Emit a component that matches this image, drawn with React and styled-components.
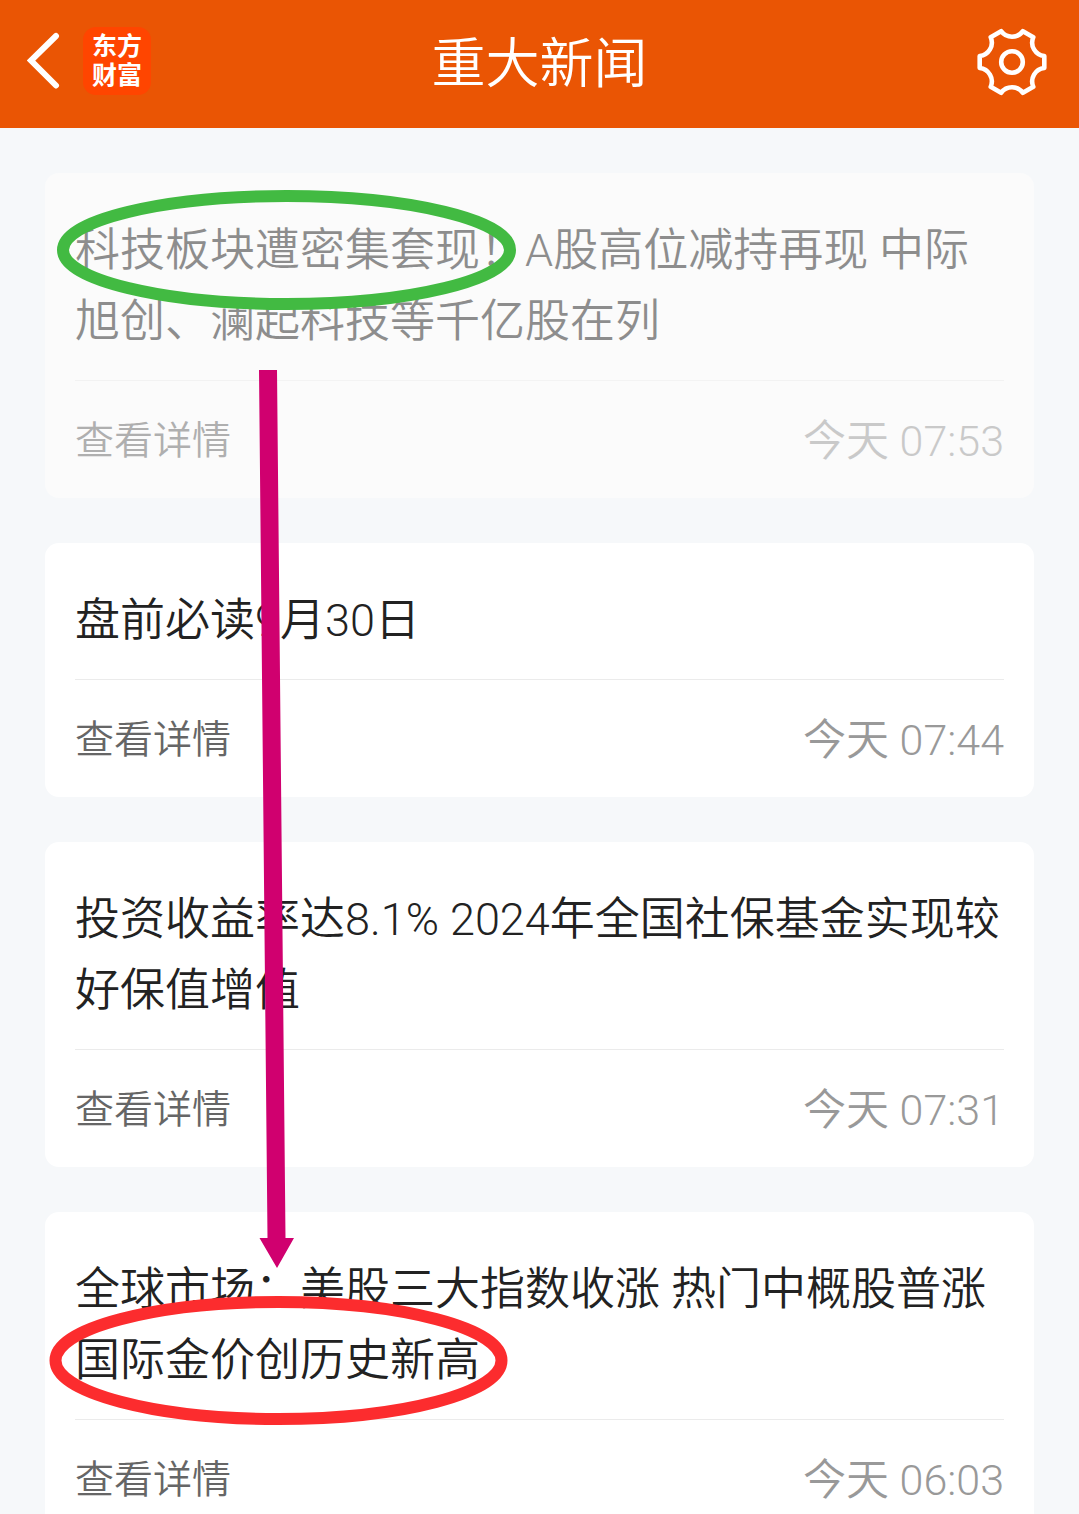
import React from "react";
import styled, { createGlobalStyle } from "styled-components";

const GlobalStyle = createGlobalStyle`
  * { box-sizing: border-box; }
  body {
    margin: 0;
    background: #f6f8fa;
    font-family: Roboto, "Noto Sans CJK SC", sans-serif;
    font-weight: 350;
  }
`;

const Screen = styled.div`
  display: flex;
  flex-direction: column;
  height: 100vh;
`;

const Header = styled.header`
  display: grid;
  grid-template-columns: 1fr auto 1fr;
  align-items: center;
  flex: none;
  height: 128px;
  padding: 0 27px 6px;
  background: #ea5504;
  color: #fff;
`;

const HeaderSide = styled.div`
  display: flex;
  align-items: center;
  justify-content: ${(p) => (p.$end ? "flex-end" : "flex-start")};
  gap: 20px;
`;

const IconButton = styled.button`
  display: flex;
  padding: 0;
  border: 0;
  background: none;
  color: inherit;
  cursor: pointer;
`;

const Logo = styled.a`
  width: 68px;
  height: 68px;
  padding: 5px 9px;
  border-radius: 13px;
  background: #ff4500;
  color: #fff;
  font-size: 25px;
  font-weight: 700;
  line-height: 29px;
  text-decoration: none;
`;

const Title = styled.h1`
  margin: 0;
  padding-top: 8px;
  font-size: 54px;
  font-weight: 350;
  line-height: 80px;
`;

const Feed = styled.main`
  position: relative;
  display: flex;
  flex-direction: column;
  gap: 45px;
  flex: 1;
  min-height: 0;
  padding: 45px;
  overflow-y: auto;
  scrollbar-width: none;
`;

const Headline = styled.h2`
  margin: 0;
  padding-bottom: 23px;
  color: #222;
  font-size: 45px;
  font-weight: 350;
  line-height: 71px;
`;

const CardFooter = styled.footer`
  display: flex;
  align-items: center;
  justify-content: space-between;
  height: 118px;
  padding-top: 3px;
  border-top: 1px solid #ebebeb;
`;

const DetailLink = styled.a`
  color: #666;
  font-size: 39px;
  line-height: 60px;
  text-decoration: none;
`;

const Time = styled.time`
  color: #999;
  font-size: 43px;
  line-height: 60px;
`;

const Card = styled.article`
  flex: none;
  padding: 42px 30px 0;
  border-radius: 14px;
  background: ${(p) => (p.$read ? "#fbfbfb" : "#fff")};

  ${Headline}, ${CardFooter} {
    opacity: ${(p) => (p.$read ? 0.5 : 1)};
  }
`;

const Markup = styled.svg`
  position: absolute;
  top: 0;
  left: 0;
  pointer-events: none;
`;

const news = [
  { title: "科技板块遭密集套现！A股高位减持再现 中际旭创、澜起科技等千亿股在列", time: "07:53", read: true },
  { title: "盘前必读9月30日", time: "07:44" },
  { title: "投资收益率达8.1% 2024年全国社保基金实现较好保值增值", time: "07:31" },
  { title: "全球市场：美股三大指数收涨 热门中概股普涨 国际金价创历史新高", time: "06:03" },
];

function BackIcon() {
  return (
    <svg width="36" height="60" viewBox="3 0 36 60" fill="none" stroke="currentColor" strokeWidth="6" strokeLinecap="round" strokeLinejoin="miter" aria-hidden="true">
      <path d="M32 5 L7 29.5 L32 54.5" />
    </svg>
  );
}

function GearIcon() {
  return (
    <svg width="80" height="72" viewBox="-40 -37 80 72" fill="none" stroke="currentColor" strokeWidth="4.6" strokeLinejoin="round" aria-hidden="true">
      <path d="M32.3 -6 V6 A13.5 13.5 0 0 0 21.3 24.8 L10.9 30.8 A13.5 13.5 0 0 0 -10.9 30.8 L-21.3 24.8 A13.5 13.5 0 0 0 -32.3 6 V-6 A13.5 13.5 0 0 0 -21.3 -24.8 L-10.9 -30.8 A13.5 13.5 0 0 0 10.9 -30.8 L21.3 -24.8 A13.5 13.5 0 0 0 32.3 -6 Z" />
      <circle r="10.8" />
    </svg>
  );
}

export default function App() {
  return (
    <Screen lang="zh-CN">
      <GlobalStyle />
      <Header>
        <HeaderSide>
          <IconButton type="button" aria-label="返回">
            <BackIcon />
          </IconButton>
          <Logo href="#home">东方财富</Logo>
        </HeaderSide>
        <Title>重大新闻</Title>
        <HeaderSide $end>
          <IconButton type="button" aria-label="设置">
            <GearIcon />
          </IconButton>
        </HeaderSide>
      </Header>
      <Feed>
        {news.map((item) => (
          <Card key={item.time} $read={item.read}>
            <Headline>{item.title}</Headline>
            <CardFooter>
              <DetailLink href="#detail">查看详情</DetailLink>
              <Time dateTime={item.time}>今天 {item.time}</Time>
            </CardFooter>
          </Card>
        ))}
        <Markup width="540" height="1320" viewBox="0 0 540 1320" fill="none" aria-hidden="true">
          <ellipse cx="286.5" cy="122" rx="223.5" ry="54" stroke="#42ba42" strokeWidth="12" />
          <path d="M259 242 H277 L285.5 1110 H294 L277 1140 L259.5 1110 H267.5 Z" fill="#d0006f" />
          <ellipse cx="278.5" cy="1232.5" rx="223" ry="58.5" stroke="#fc2c2e" strokeWidth="12" />
        </Markup>
      </Feed>
    </Screen>
  );
}
